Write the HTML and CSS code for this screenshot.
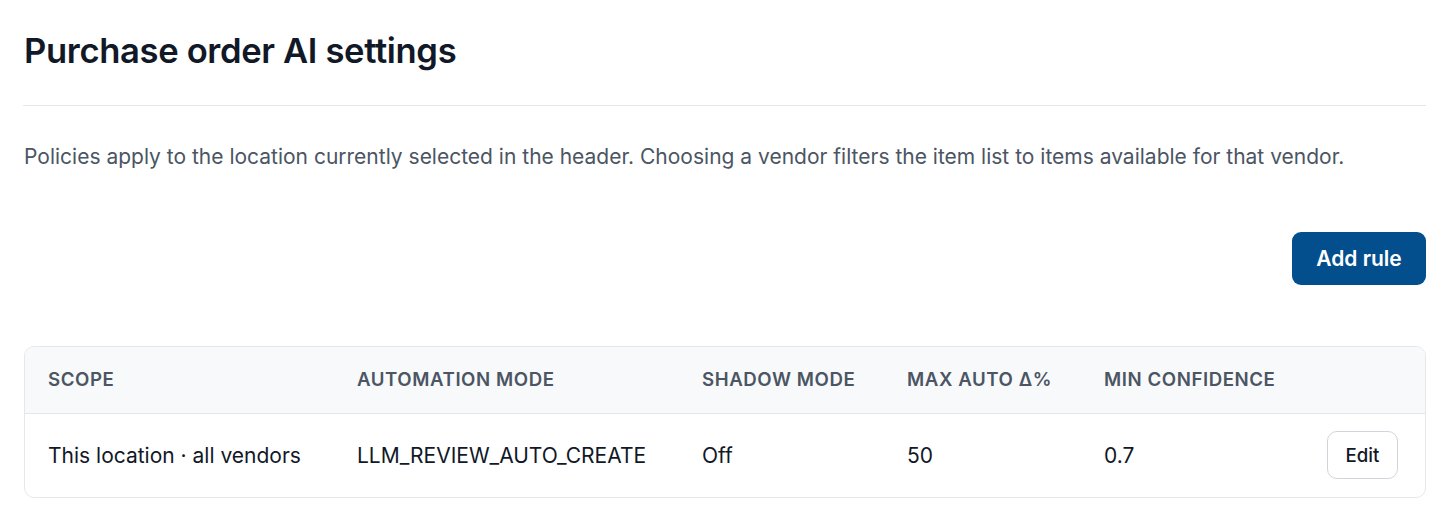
FILE: index.html
```html
<!DOCTYPE html>
<html lang="en">
<head>
<meta charset="utf-8">
<title>Purchase order AI settings</title>
<link rel="stylesheet" href="styles.css">
</head>
<body>
<main class="page">
  <header class="page-head">
    <h1 class="page-title">Purchase order AI settings</h1>
  </header>
  <p class="intro">Policies apply to the location currently selected in the header. Choosing a vendor filters the item list to items available for that vendor.</p>
  <div class="toolbar">
    <button class="btn-primary" type="button">Add rule</button>
  </div>
  <div class="card">
    <table class="rules">
      <colgroup>
        <col class="c-scope">
        <col class="c-mode">
        <col class="c-shadow">
        <col class="c-delta">
        <col class="c-conf">
        <col>
      </colgroup>
      <thead>
        <tr>
          <th>Scope</th>
          <th>Automation mode</th>
          <th>Shadow mode</th>
          <th>Max auto Δ%</th>
          <th>Min confidence</th>
          <th></th>
        </tr>
      </thead>
      <tbody>
        <tr>
          <td>This location · all vendors</td>
          <td>LLM_REVIEW_AUTO_CREATE</td>
          <td>Off</td>
          <td>50</td>
          <td>0.7</td>
          <td class="actions"><button class="btn-secondary" type="button">Edit</button></td>
        </tr>
      </tbody>
    </table>
  </div>
</main>
</body>
</html>
```

FILE: styles.css
```css
* { box-sizing: border-box; }

html, body {
  margin: 0;
  background: #ffffff;
}

body {
  font-family: Inter, "Noto Sans", sans-serif;
  color: #111827;
}

.page {
  padding: 0 19px 0 23px;
}

.page-head {
  padding-top: 28px;
  padding-bottom: 33px;
  border-bottom: 1px solid #e5e7eb;
}

.page-title {
  margin: 0;
  font-size: 34.6px;
  line-height: 44px;
  font-weight: 600;
  letter-spacing: -0.01em;
  color: #111827;
  padding-left: 1px;
}

.intro {
  margin: 31px 0 0 1px;
  font-size: 21px;
  line-height: 40px;
  color: #4b5563;
}

.toolbar {
  display: flex;
  justify-content: flex-end;
  margin-top: 55px;
}

.btn-primary {
  font-family: inherit;
  font-size: 21px;
  font-weight: 600;
  color: #ffffff;
  background: #034e8c;
  border: none;
  border-radius: 9px;
  width: 134px;
  height: 53px;
  cursor: pointer;
}

.card {
  margin-top: 61px;
  margin-left: 1px;
  border: 1px solid #e5e7eb;
  border-radius: 10px;
  overflow: hidden;
}

.rules {
  width: 100%;
  border-collapse: collapse;
  table-layout: fixed;
}

.c-scope { width: 309px; }
.c-mode { width: 345px; }
.c-shadow { width: 205px; }
.c-delta { width: 197px; }
.c-conf { width: 200px; }

.rules th {
  background: #f8f9fb;
  height: 66px;
  padding: 0 0 0 23px;
  text-align: left;
  font-size: 18.67px;
  font-weight: 600;
  letter-spacing: 0.03em;
  text-transform: uppercase;
  color: #4b5563;
  border-bottom: 1px solid #e5e7eb;
}

.rules td {
  height: 84px;
  padding: 0 0 0 23px;
  font-size: 21px;
  color: #111827;
  white-space: nowrap;
}

.rules td.actions {
  text-align: right;
  padding-right: 27px;
}

.btn-secondary {
  font-family: inherit;
  font-size: 18.67px;
  font-weight: 500;
  color: #111827;
  background: #ffffff;
  border: 1px solid #d1d5db;
  border-radius: 10px;
  width: 71px;
  height: 48px;
  cursor: pointer;
}
```
